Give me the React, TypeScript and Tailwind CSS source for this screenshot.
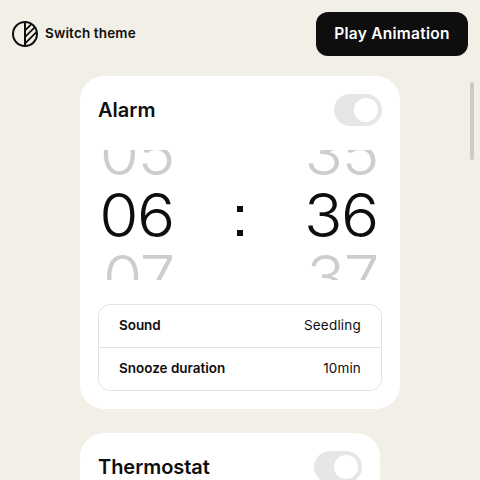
function ThemeIcon() {
  return (
    <svg width="26" height="26" viewBox="0 0 26 26" fill="none" stroke="#0e0e0e" strokeWidth="2">
      <defs>
        <clipPath id="half">
          <path d="M13 1a12 12 0 0 1 0 24z" />
        </clipPath>
      </defs>
      <circle cx="13" cy="13" r="12" />
      <path d="M13 1v24" />
      <g clipPath="url(#half)" strokeWidth="1.8">
        <path d="M12 10.5L23 -0.5M12 17L26 3M12 23.5L28 7.5" />
      </g>
    </svg>
  );
}

function Toggle() {
  return (
    <button role="switch" aria-checked="true" className="flex h-8 w-12 items-center justify-end rounded-full bg-[#e6e6e6] p-1">
      <span className="size-6 rounded-full bg-white" />
    </button>
  );
}

function CardHeader({ title, className }: { title: string; className: string }) {
  return (
    <div className="flex h-8 items-center justify-between">
      <h2 className={`text-[20px] leading-8 font-semibold ${className}`}>{title}</h2>
      <Toggle />
    </div>
  );
}

function Wheel({ values }: { values: string[] }) {
  return (
    <div className="flex h-[130px] w-20 origin-right scale-x-106 flex-col justify-center overflow-hidden text-right text-[60px] leading-[62px] font-light tracking-[-1.3px]">
      {values.map((v, i) => (
        <div key={v} className={i === 1 ? "h-[62px] shrink-0 text-[#0e0e0e]" : "h-[62px] shrink-0 text-[#cdcdcd]"}>
          {v}
        </div>
      ))}
    </div>
  );
}

export default function App() {
  return (
    <div className="flex h-[480px] w-[480px] flex-col overflow-hidden bg-[#f2efe7] font-['Inter','Liberation_Sans',sans-serif] text-[#0e0e0e]">
      <header className="flex h-[68px] shrink-0 items-center justify-between px-3">
        <button className="flex items-center gap-[7px] text-[13.5px] leading-5 font-semibold tracking-[0.15px]">
          <ThemeIcon />
          <span className="pb-0.5">Switch theme</span>
        </button>
        <button className="h-11 w-[152px] rounded-xl bg-[#0e0e0e] text-[15.5px] font-semibold tracking-[0.27px] text-white">
          Play Animation
        </button>
      </header>
      <div className="flex min-h-0 grow">
        <main className="ml-20 w-80 shrink-0 pt-2">
          <section className="h-[333px] rounded-3xl bg-white p-[18px]">
            <CardHeader title="Alarm" className="tracking-[0px]" />
            <div className="mt-6 flex h-[130px] items-center justify-between">
              <div className="-ml-1">
                <Wheel values={["05", "06", "07"]} />
              </div>
              <div className="ml-2 flex flex-col gap-[18px] pt-3">
                <span className="size-1.5 bg-[#0e0e0e]" />
                <span className="size-1.5 bg-[#0e0e0e]" />
              </div>
              <div className="pr-1">
                <Wheel values={["35", "36", "37"]} />
              </div>
            </div>
            <dl className="mt-6 h-[87px] divide-y divide-[#e2e2e2] rounded-xl border border-[#e2e2e2] text-[13.5px] leading-5">
              <div className="flex h-[43px] items-center justify-between px-5 pb-0.5">
                <dt className="font-semibold tracking-[-0.05px]">Sound</dt>
                <dd className="tracking-[0.2px]">Seedling</dd>
              </div>
              <div className="flex h-[42px] items-center justify-between px-5 pb-0.5">
                <dt className="font-semibold tracking-[-0.02px]">Snooze duration</dt>
                <dd className="tracking-[0.15px]">10min</dd>
              </div>
            </dl>
          </section>
          <section className="mt-6 h-[300px] w-[300px] rounded-3xl bg-white p-[18px]">
            <CardHeader title="Thermostat" className="tracking-[-0.05px]" />
          </section>
        </main>
        <div className="mt-[14px] mr-1.5 ml-auto h-[78px] w-1 rounded-full bg-[#cdcbc5]" />
      </div>
    </div>
  );
}
